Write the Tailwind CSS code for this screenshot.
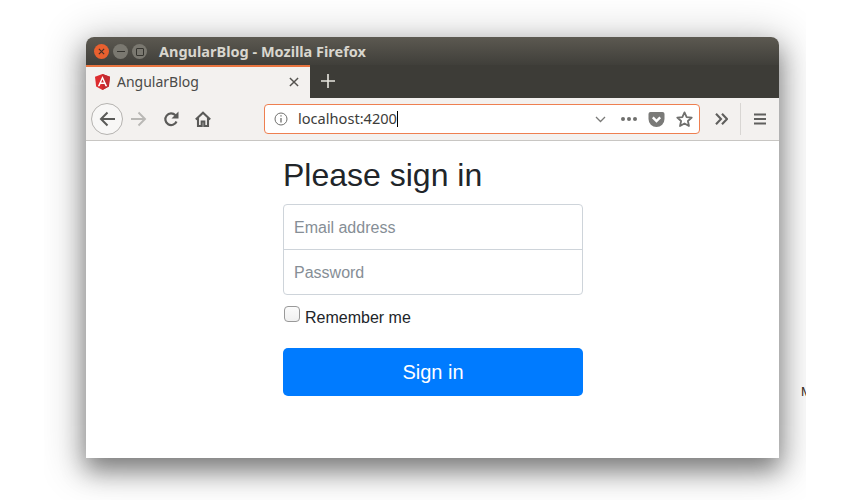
<!DOCTYPE html>
<html lang="en">

<head>
  <meta charset="UTF-8" />
  <title>AngularBlog</title>
  <script src="https://cdn.jsdelivr.net/npm/@tailwindcss/browser@4"></script>
</head>

<body class="bg-white w-[850px] h-[500px] overflow-hidden font-['Liberation_Sans',sans-serif]">

  <!-- Clipped area round the window: the shadow stops at its edges -->
  <div class="relative w-[762px] h-[500px] ml-[44px] pl-[42px] pt-[37px] overflow-hidden">

    <span class="absolute left-[757px] top-[384px] text-[13px] leading-[16px] text-[#3a2a20]">M</span>

    <div class="w-[693px] h-[421px] rounded-t-[8px] bg-white flex flex-col shadow-[0_12px_24px_0_rgba(0,0,0,0.42),0_6px_40px_8px_rgba(0,0,0,0.2)]">

      <!-- Title bar -->
      <div class="h-[28px] flex items-center rounded-t-[8px] bg-gradient-to-b from-[#5c5951] to-[#403f3a] pl-[8px] pt-[1px]">
        <div class="flex items-center gap-[4px]">
          <div class="w-[15px] h-[15px] rounded-full bg-[#e9602f] flex items-center justify-center">
            <svg class="w-[7px] h-[7px]" viewBox="0 0 8 8" fill="none" stroke="#40302a" stroke-width="1.3">
              <path d="M1 1l6 6M7 1L1 7" />
            </svg>
          </div>
          <div class="w-[15px] h-[15px] rounded-full bg-[#7a7870] flex items-center justify-center">
            <div class="w-[8px] h-[1px] bg-[#35342f]"></div>
          </div>
          <div class="w-[15px] h-[15px] rounded-full bg-[#7a7870] flex items-center justify-center">
            <div class="w-[8px] h-[8px] border border-[#35342f] rounded-[1px]"></div>
          </div>
        </div>
        <span class="ml-[12px] font-['Noto_Sans',sans-serif] font-bold text-[14.5px] text-[#d8d6ce]">AngularBlog - Mozilla Firefox</span>
      </div>

      <!-- Tab strip -->
      <div class="h-[33px] flex bg-[#3d3c37]">
        <div class="w-[224px] h-[33px] bg-[#f3f1ef] border-t-2 border-[#e8743f] flex items-center pl-[9px] pr-[11px] pb-[2px]">
          <svg class="w-[15px] h-[16px]" viewBox="0 0 250 266">
            <path fill="#dd2c2f" d="M125 0L0 44l19 165 106 57 106-57 19-165z" />
            <path fill="#c32a2f" d="M125 0v266l106-57 19-165z" />
            <path fill="#fff" d="M125 31L47 204h29l16-39h66l16 39h29zm23 111h-46l23-55z" />
          </svg>
          <span class="ml-[7px] font-['Noto_Sans',sans-serif] text-[14px] text-[#4a4a48]">AngularBlog</span>
          <svg class="ml-auto w-[10px] h-[10px]" viewBox="0 0 11 11" fill="none" stroke="#55534f" stroke-width="1.6">
            <path d="M1 1l9 9M10 1L1 10" />
          </svg>
        </div>
        <div class="w-[35px] flex items-center justify-center pb-[2px]">
          <svg class="w-[14px] h-[14px]" viewBox="0 0 14 14" fill="none" stroke="#e8e6df" stroke-width="1.6">
            <path d="M7 0v14M0 7h14" />
          </svg>
        </div>
      </div>

      <!-- Toolbar -->
      <div class="h-[43px] flex items-center bg-[#f3f1ef] border-b border-[#c8c6c3] pl-[5px] pr-[13px]">
        <div class="w-[32px] h-[32px] rounded-full border border-[#b5b3b0] bg-[#f8f7f6] flex items-center justify-center">
          <svg class="w-[16px] h-[16px]" viewBox="0 0 16 16" fill="none" stroke="#5a5a58" stroke-width="2">
            <path d="M16 8H2M8.500 1.500L2 8l6.500 6.500" />
          </svg>
        </div>
        <svg class="ml-[8px] w-[16px] h-[16px]" viewBox="0 0 16 16" fill="none" stroke="#b9b8b5" stroke-width="1.9">
          <path d="M0 8h14M7.500 1.500L14 8l-6.500 6.500" />
        </svg>
        <svg class="ml-[16px] w-[16px] h-[16px]" viewBox="0 0 16 16" fill="none" stroke="#5a5a58" stroke-width="2.200">
          <path d="M13.500 10.500A5.800 5.800 0 1 1 12.400 4.300" />
          <path fill="#5a5a58" stroke="none" d="M15.500 0.500v7h-7z" />
        </svg>
        <svg class="ml-[16px] w-[16px] h-[16px]" viewBox="0 0 16 16" fill="none" stroke="#5a5a58" stroke-width="2.100">
          <path d="M0.800 8.500L8 1.700l7.200 6.800" />
          <path d="M3 7v8h3.700v-4.500h2.600V15H13V7" />
        </svg>

        <!-- URL bar -->
        <div class="ml-[53px] w-[436px] h-[30px] rounded-[4px] border border-[#ee7f50] bg-white flex items-center pl-[9px] pr-[6px]">
          <svg class="w-[14px] h-[14px]" viewBox="0 0 14 14" fill="none" stroke="#6f6f6d" stroke-width="1">
            <circle cx="7" cy="7" r="6" />
            <path stroke-width="1.300" d="M7 6v4.500M7 3.300v1.300" />
          </svg>
          <span class="ml-[10px] font-['Noto_Sans',sans-serif] text-[14.6px] text-[#3c3c3a]">localhost:4200</span>
          <div class="w-px h-[16px] bg-black"></div>
          <svg class="ml-auto w-[11px] h-[7px]" viewBox="0 0 11 7" fill="none" stroke="#7a7a78" stroke-width="1.300">
            <path d="M1 1l4.500 4.500L10 1" />
          </svg>
          <div class="ml-[15px] flex gap-[2px]">
            <div class="w-[4px] h-[4px] rounded-full bg-[#6f6f6d]"></div>
            <div class="w-[4px] h-[4px] rounded-full bg-[#6f6f6d]"></div>
            <div class="w-[4px] h-[4px] rounded-full bg-[#6f6f6d]"></div>
          </div>
          <svg class="ml-[11px] w-[17px] h-[15px]" viewBox="0 0 16 15">
            <path fill="#7a7a78" d="M2 0h12a2 2 0 0 1 2 2v5a8 8 0 0 1-16 0V2a2 2 0 0 1 2-2z" />
            <path fill="none" stroke="#fff" stroke-width="2.400" d="M4.300 5.300L8 9l3.700-3.700" />
          </svg>
          <svg class="ml-[11px] w-[17px] h-[17px]" viewBox="0 0 16 16" fill="none" stroke="#6f6f6d" stroke-width="1.700">
            <path stroke-linejoin="round" d="M8 1.300l2 4.400 4.800.5-3.600 3.200 1 4.700L8 11.700l-4.200 2.400 1-4.700L1.200 6.200 6 5.700z" />
          </svg>
        </div>

        <svg class="ml-[15px] w-[13px] h-[12px]" viewBox="0 0 13 12" fill="none" stroke="#5f5f5d" stroke-width="2.100">
          <path d="M1 0.800l5 5.200-5 5.200M7 0.800l5 5.200-5 5.200" />
        </svg>
        <div class="ml-[12px] w-px h-[32px] bg-[#d8d6d3]"></div>
        <svg class="ml-[13px] w-[12px] h-[12px]" viewBox="0 0 12 12" fill="#5f5f5d">
          <path d="M0 0.500h12v2H0zM0 5h12v2H0zM0 9.500h12v2H0z" />
        </svg>
      </div>

      <!-- Page content -->
      <div class="flex-1 bg-white">
        <form class="w-[300px] ml-[197px]">
          <h1 class="h-[63px] pt-[15px] text-[32px] leading-[38px] text-[#212529]">Please sign in</h1>
          <div class="h-[91px] rounded-[4px] border border-[#ced4da] flex flex-col">
            <input type="email" placeholder="Email address" class="h-[45px] pt-[2px] px-[10px] text-[16px] border-b border-[#ced4da] outline-none placeholder:text-[#868e96]" />
            <input type="password" placeholder="Password" class="h-[44px] pt-[2px] px-[10px] text-[16px] outline-none placeholder:text-[#868e96]" />
          </div>
          <label class="mt-[11px] flex items-start text-[16px] leading-[24px] text-[#212529] h-[24px]">
            <span class="ml-[1px] w-[16px] h-[16px] rounded-[4px] border border-[#999999] bg-gradient-to-b from-[#fbfbfb] to-[#f0f0f0]"></span>
            <span class="ml-[5px]">Remember me</span>
          </label>
          <button type="button" class="mt-[18px] w-[300px] h-[48px] rounded-[5px] bg-[#007bff] text-white text-[20px]">Sign in</button>
        </form>
      </div>
    </div>
  </div>

</body>

</html>
